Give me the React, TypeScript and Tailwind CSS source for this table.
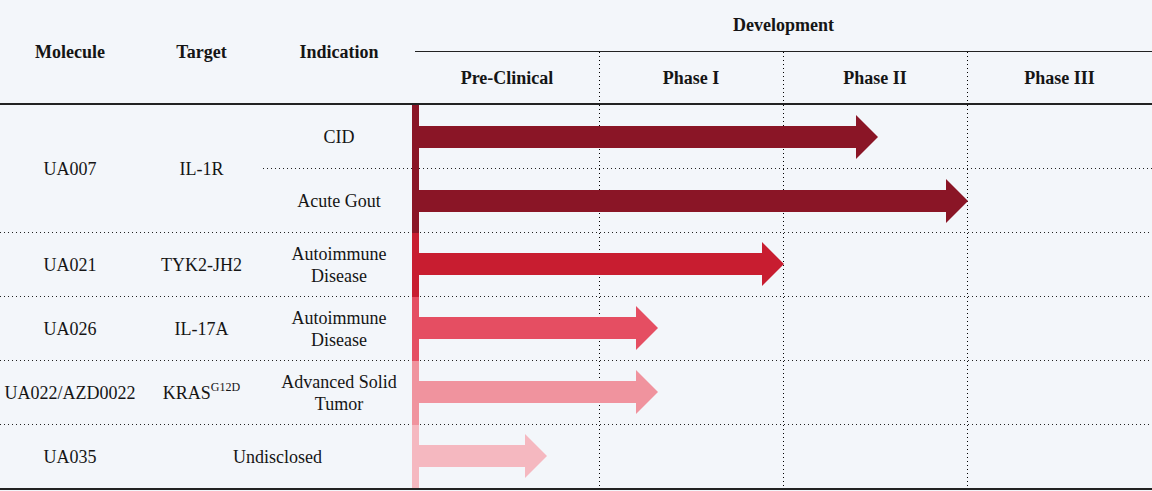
import React from "react";

const VDOT =
  "bg-[image:repeating-linear-gradient(180deg,#000_0px,#000_1px,transparent_1px,transparent_4px)] bg-[length:1px_100%] bg-left bg-no-repeat";
const HDOT =
  "bg-[image:repeating-linear-gradient(90deg,#222_0px,#222_1px,transparent_1px,transparent_4px)] bg-[length:100%_1px] bg-bottom bg-no-repeat";

type Arrow = { cy: number; tip: number };

function Track({ color, height, arrows }: { color: string; height: number; arrows: Arrow[] }) {
  const w = Math.max(...arrows.map((a) => a.tip)) - 412 + 1;
  return (
    <svg className="absolute left-[412px] top-0" width={w} height={height}>
      <rect x={0} y={0} width={7} height={height} fill={color} />
      {arrows.map((a, i) => {
        const t = a.tip - 412;
        const h = t - 22;
        return (
          <polygon
            key={i}
            points={`7,${a.cy - 11} ${h},${a.cy - 11} ${h},${a.cy - 22} ${t},${a.cy} ${h},${a.cy + 22} ${h},${a.cy + 11} 7,${a.cy + 11}`}
            fill={color}
          />
        );
      })}
    </svg>
  );
}

function PhaseCells() {
  return (
    <>
      <div />
      <div className={VDOT} />
      <div className={VDOT} />
      <div className={VDOT} />
    </>
  );
}

function Cell({ children, className = "" }: { children: React.ReactNode; className?: string }) {
  return <div className={`flex items-center justify-center text-center ${className}`}>{children}</div>;
}

function Row({
  mol,
  target,
  ind,
  color,
  tip,
  last,
}: {
  mol: string;
  target: React.ReactNode;
  ind: React.ReactNode;
  color: string;
  tip: number;
  last?: boolean;
}) {
  const h = last ? 63 : 64;
  return (
    <div
      className={`relative grid grid-cols-[140px_123px_152px_184px_184px_184px_1fr] ${last ? "h-[63px]" : `h-[64px] ${HDOT}`}`}
    >
      <Cell>{mol}</Cell>
      {ind === null ? (
        <Cell className="col-span-2">{target}</Cell>
      ) : (
        <>
          <Cell>{target}</Cell>
          <Cell>{ind}</Cell>
        </>
      )}
      <PhaseCells />
      <Track color={color} height={h} arrows={[{ cy: 31, tip }]} />
    </div>
  );
}

export default function App() {
  return (
    <div className="w-[1152px] h-[491px] bg-[#f3f6fa] font-['Liberation_Serif',serif] text-[18px] leading-[22px] text-[#151515]">
      {/* Header */}
      <div className="grid grid-cols-[140px_123px_152px_1fr] h-[103px] font-bold">
        <Cell>Molecule</Cell>
        <Cell>Target</Cell>
        <Cell>Indication</Cell>
        <div className="flex flex-col">
          <div className="h-[52px] flex items-center justify-center border-b border-[#222] pb-[1px]">Development</div>
          <div className="flex-1 grid grid-cols-[184px_184px_184px_1fr]">
            <Cell className="pt-[1px]">Pre-Clinical</Cell>
            <Cell className={`pt-[1px] ${VDOT}`}>Phase I</Cell>
            <Cell className={`pt-[1px] ${VDOT}`}>Phase II</Cell>
            <Cell className={`pt-[1px] ${VDOT}`}>Phase III</Cell>
          </div>
        </div>
      </div>
      <div className="h-[2px] bg-[#222]" />

      {/* UA007 */}
      <div className={`relative grid grid-cols-[140px_123px_1fr] h-[128px] ${HDOT}`}>
        <Cell>UA007</Cell>
        <Cell>IL-1R</Cell>
        <div className="flex flex-col">
          <div className={`grid grid-cols-[152px_184px_184px_184px_1fr] h-[64px] ${HDOT}`}>
            <Cell>CID</Cell>
            <PhaseCells />
          </div>
          <div className="grid grid-cols-[152px_184px_184px_184px_1fr] h-[64px]">
            <Cell>Acute Gout</Cell>
            <PhaseCells />
          </div>
        </div>
        <Track
          color="#8a1526"
          height={128}
          arrows={[
            { cy: 32, tip: 878 },
            { cy: 96, tip: 968 },
          ]}
        />
      </div>

      <Row
        mol="UA021"
        target="TYK2-JH2"
        ind={
          <span>
            Autoimmune
            <br />
            Disease
          </span>
        }
        color="#c81d30"
        tip={784}
      />
      <Row
        mol="UA026"
        target="IL-17A"
        ind={
          <span>
            Autoimmune
            <br />
            Disease
          </span>
        }
        color="#e54e62"
        tip={658}
      />
      <Row
        mol="UA022/AZD0022"
        target={
          <span>
            KRAS<sup className="text-[12px] align-baseline relative -top-[8px]">G12D</sup>
          </span>
        }
        ind={
          <span>
            Advanced Solid
            <br />
            Tumor
          </span>
        }
        color="#f0939e"
        tip={658}
      />
      <Row mol="UA035" target="Undisclosed" ind={null} color="#f5b8c0" tip={547} last />
      <div className="h-[2px] bg-[#222]" />
    </div>
  );
}
